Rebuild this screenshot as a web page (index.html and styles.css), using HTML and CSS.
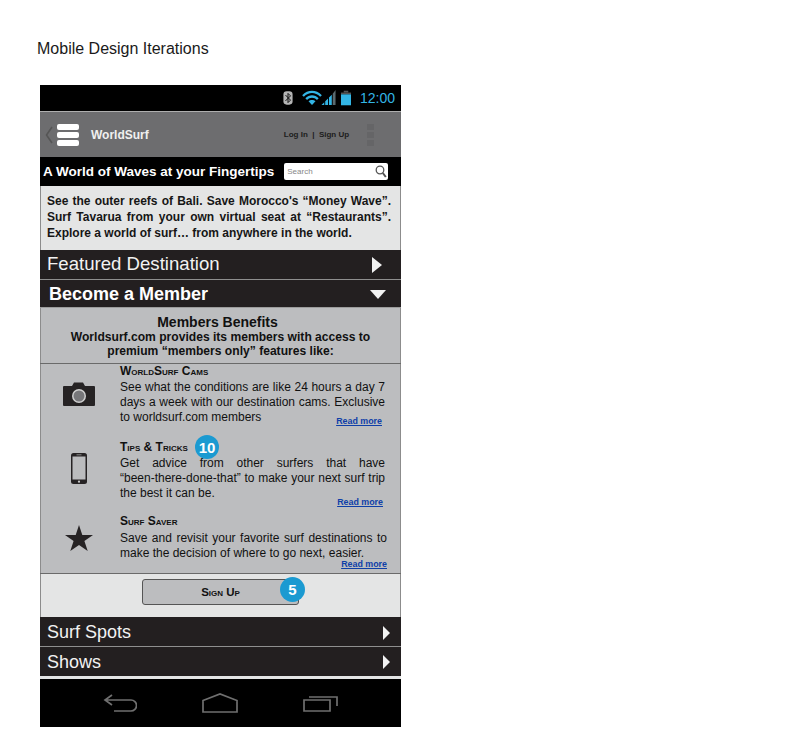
FILE: index.html
```html
<!DOCTYPE html>
<html lang="en">
<head>
  <meta charset="UTF-8" />
  <title>Mobile Design Iterations</title>
  <link rel="stylesheet" href="styles.css">
</head>
<body>

  <h1 class="page-title">Mobile Design Iterations</h1>

  <div class="phone">
    <div class="status-bar">
      <svg class="bt" width="10" height="16" viewBox="0 0 12 17">
        <rect x="0.5" y="0.5" width="11" height="16" rx="4" fill="#b5b5b5"/>
        <path d="M3 5l6 6-3 3V3l3 3-6 6" fill="none" stroke="#111" stroke-width="1.2"/>
      </svg>
      <svg class="wifi" width="20" height="15" viewBox="0 0 21 16">
        <path d="M0 5.500C6 -0.700 15 -0.700 21 5.500l-1.800 1.800C14 2 7 2 1.800 7.300z" fill="#33b5e5"/>
        <path d="M3.400 8.800C7.500 4.600 13.500 4.600 17.600 8.800l-1.800 1.800C12.700 7.500 8.300 7.500 5.200 10.600z" fill="#33b5e5"/>
        <path d="M6.800 12.100C8.700 10.200 12.300 10.200 14.200 12.100L10.500 16z" fill="#33b5e5"/>
      </svg>
      <svg class="signal" width="15" height="15" viewBox="0 0 15 16">
        <path d="M0 16L3 13V16zM4 16V12L7 9V16zM8 16V8L11 5V16z" fill="#33b5e5"/>
        <path d="M12 16V4L15 0V16z" fill="#5a6a70"/>
      </svg>
      <svg class="battery" width="10" height="16" viewBox="0 0 11 16">
        <rect x="3" y="0" width="5" height="2" fill="#555"/>
        <rect x="0" y="2" width="11" height="2" fill="#555"/>
        <rect x="0" y="4" width="11" height="12" fill="#33b5e5"/>
      </svg>
      <span class="clock">12:00</span>
    </div>

    <div class="app-header">
      <svg class="back" width="8" height="18" viewBox="0 0 8 18">
        <path d="M7 1L1.500 9 7 17" fill="none" stroke="#555" stroke-width="1.600"/>
      </svg>
      <div class="logo-stack"><i></i><i></i><i></i></div>
      <span class="brand">WorldSurf</span>
      <span class="auth">Log In &nbsp;|&nbsp; Sign Up</span>
      <div class="overflow"><i></i><i></i><i></i></div>
    </div>

    <div class="tagline">
      <span>A World of Waves at your Fingertips</span>
      <div class="search">
        <span>Search</span>
        <svg width="12" height="13" viewBox="0 0 12 13">
          <circle cx="5" cy="5" r="3.800" fill="none" stroke="#555" stroke-width="1.300"/>
          <path d="M7.800 8l3 4" stroke="#555" stroke-width="2"/>
        </svg>
      </div>
    </div>

    <p class="intro">
      <span class="fit">See the outer reefs of Bali. Save Morocco's “Money Wave”.</span>
      <span class="fit">Surf Tavarua from your own virtual seat at “Restaurants”.</span>
      <span>Explore a world of surf… from anywhere in the world.</span>
    </p>

    <div class="row row-featured">
      <span>Featured Destination</span>
      <div class="arrow-right big"></div>
    </div>
    <div class="row row-member">
      <span>Become a Member</span>
      <div class="arrow-down"></div>
    </div>

    <div class="benefits-head">
      <h3>Members Benefits</h3>
      <p>Worldsurf.com provides its members with access to premium “members only” features like:</p>
    </div>

    <div class="benefits">
      <div class="benefit cams">
        <div class="benefit-icon">
          <svg width="32" height="24" viewBox="0 0 32 24">
            <path d="M1 4h8l2-3.500h9l2 3.500h9a1 1 0 0 1 1 1v18a1 1 0 0 1-1 1H1a1 1 0 0 1-1-1V5a1 1 0 0 1 1-1z" fill="#262324"/>
            <circle cx="16" cy="14" r="7" fill="#d0d0d0"/>
            <circle cx="16" cy="14" r="5.500" fill="#77777a"/>
          </svg>
        </div>
        <div class="benefit-body">
          <h4>WorldSurf Cams</h4>
          <p>See what the conditions are like 24 hours a day 7 days a week with our destination cams. Exclusive to worldsurf.com members</p>
          <a class="more" href="#">Read more</a>
        </div>
      </div>

      <div class="benefit tips">
        <div class="benefit-icon">
          <svg width="16" height="31" viewBox="0 0 16 31">
            <rect x="0" y="0" width="16" height="31" rx="2.500" fill="#262324"/>
            <rect x="1.500" y="3.500" width="13" height="23" fill="#bbbcbe"/>
            <rect x="5.500" y="1.300" width="5" height="1" fill="#888"/>
            <circle cx="8" cy="28.700" r="1.100" fill="#ccc"/>
          </svg>
        </div>
        <div class="benefit-body">
          <h4>Tips &amp; Tricks</h4>
          <p>
            <span class="fit">Get advice from other surfers that have</span>
            <span class="fit">“been-there-done-that” to make your next surf trip</span>
            <span>the best it can be.</span>
          </p>
          <a class="more" href="#">Read more</a>
        </div>
        <span class="badge badge-tips">10</span>
      </div>

      <div class="benefit saver">
        <div class="benefit-icon">
          <svg width="28" height="26" viewBox="0 0 28 26">
            <path d="M14 0l3.300 9.900H28l-8.600 6.200 3.300 9.900L14 19.900 5.300 26l3.300-9.900L0 9.900h10.700z" fill="#262324"/>
          </svg>
        </div>
        <div class="benefit-body">
          <h4>Surf Saver</h4>
          <p>Save and revisit your favorite surf destinations to make the decision of where to go next, easier.</p>
          <a class="more" href="#">Read more</a>
        </div>
      </div>
    </div>

    <div class="signup">
      <button class="signup-btn">Sign Up</button>
      <span class="badge badge-signup">5</span>
    </div>

    <div class="row row-spots">
      <span>Surf Spots</span>
      <div class="arrow-right"></div>
    </div>
    <div class="row row-shows">
      <span>Shows</span>
      <div class="arrow-right"></div>
    </div>

    <div class="nav-bar">
      <svg width="34" height="18" viewBox="0 0 34 18">
        <path d="M9 1L2 6l7 5M2 6h26a4.500 4.500 0 0 1 0 11H11" fill="none" stroke="#6f6f6f" stroke-width="1.700"/>
      </svg>
      <svg width="36" height="20" viewBox="0 0 36 20">
        <path d="M1 7.500L18 1l17 6.500V19H1z" fill="none" stroke="#6f6f6f" stroke-width="1.700"/>
      </svg>
      <svg width="35" height="18" viewBox="0 0 35 18">
        <path d="M1 6h26v11H1zM6 3h28v9" fill="none" stroke="#6f6f6f" stroke-width="1.700"/>
      </svg>
    </div>
  </div>

</body>
</html>
```

FILE: styles.css
```css
* {
  box-sizing: border-box;
}

body {
  margin: 0;
  padding: 40px 0 0 37px;
  background: #fff;
  color: #111;
  font-family: 'Liberation Sans', Arial, sans-serif;
}

.page-title {
  margin: 0 0 28px;
  font-size: 16px;
  line-height: 17px;
  font-weight: normal;
  color: #1a1a1a;
}

.phone {
  position: relative;
  width: 361px;
  height: 642px;
  margin-left: 3px;
  background: #e4e5e5;
  overflow: hidden;
}

.status-bar {
  display: flex;
  align-items: center;
  justify-content: flex-end;
  height: 26px;
  padding-right: 6px;
  background: #000;
  border-bottom: 1px solid #000;
}

.bt { margin-right: 9px; }
.wifi { margin-right: -1px; }
.signal { margin-right: 5px; }
.battery { margin-right: 9px; }

.clock {
  font-size: 14px;
  color: #33b5e5;
}

.app-header {
  display: flex;
  align-items: center;
  height: 46px;
  padding-left: 5px;
  background: #6d6d6f;
  border-top: 1px solid #aeaeae;
}

.back { margin-right: 4px; }

.logo-stack {
  display: flex;
  flex-direction: column;
  gap: 2px;
  width: 22px;
}

.logo-stack i {
  display: block;
  height: 6px;
  background: #fff;
  border-radius: 2px;
}

.brand {
  margin-left: 12px;
  font-size: 12px;
  font-weight: bold;
  color: #f0f0f0;
}

.auth {
  margin-left: 135px;
  font-size: 8px;
  font-weight: bold;
  color: #1c1c1c;
  white-space: nowrap;
}

.overflow {
  display: flex;
  flex-direction: column;
  gap: 2px;
  margin-left: 18px;
}

.overflow i {
  display: block;
  width: 7px;
  height: 6px;
  background: #656567;
}

.tagline {
  display: flex;
  align-items: center;
  height: 29px;
  padding-left: 3px;
  background: #000;
  color: #fff;
  font-size: 13.500px;
  font-weight: bold;
  white-space: nowrap;
}

.search {
  display: flex;
  align-items: center;
  justify-content: space-between;
  width: 104px;
  height: 17px;
  margin-left: 10px;
  padding: 0 1px 0 3px;
  background: #fff;
  border-radius: 2px;
  font-size: 8px;
  font-weight: normal;
  color: #888;
}

.intro,
.benefits-head,
.benefits,
.signup {
  box-shadow: inset 1px 0 #8c8c8c, inset -1px 0 #8c8c8c;
}

.intro {
  height: 64px;
  margin: 0;
  padding: 7px 10px 0 7px;
  font-size: 12px;
  line-height: 16px;
  font-weight: bold;
  color: #161616;
}

.fit {
  display: block;
  text-align: justify;
  text-align-last: justify;
}

.row {
  display: flex;
  align-items: center;
  justify-content: space-between;
  background: #231f20;
  color: #f2f2f2;
}

.row-featured {
  height: 30px;
  padding: 0 19px 0 7px;
  border-bottom: 1px solid #8f8f8f;
  font-size: 18.600px;
}

.row-featured span {
  margin-bottom: 2px;
}

.row-member {
  height: 28px;
  padding: 2px 15px 0 9px;
  border-bottom: 1px solid #9c9c9c;
  font-size: 18px;
  font-weight: bold;
  color: #fff;
}

.row-spots,
.row-shows {
  height: 30px;
  padding: 0 11px 0 7px;
  font-size: 18px;
}

.row-spots {
  padding-top: 2px;
  border-bottom: 1px solid #8f8f8f;
}

.row-shows {
  height: 29px;
}

.row-shows span {
  margin-top: 2px;
}

.arrow-right {
  width: 0;
  height: 0;
  border-top: 7px solid transparent;
  border-bottom: 7px solid transparent;
  border-left: 7px solid #f2f2f2;
}

.arrow-right.big {
  border-top-width: 8px;
  border-bottom-width: 8px;
  border-left-width: 10px;
}

.arrow-down {
  width: 0;
  height: 0;
  border-left: 8px solid transparent;
  border-right: 8px solid transparent;
  border-top: 9px solid #f2f2f2;
}

.benefits-head {
  height: 56px;
  padding-top: 7px;
  background-color: #bcbdbf;
  border-bottom: 1px solid #6a6a6a;
  text-align: center;
  color: #111;
}

.benefits-head h3 {
  margin: 0;
  padding-right: 6px;
  font-size: 14px;
  line-height: 15px;
  font-weight: bold;
}

.benefits-head p {
  margin: 0 auto;
  width: 330px;
  font-size: 12.100px;
  line-height: 14px;
  font-weight: bold;
}

.benefits {
  height: 210px;
  background: #bcbdbf;
  border-bottom: 1px solid #6a6a6a;
}

.benefit {
  position: relative;
  display: flex;
}

.benefit-icon {
  display: flex;
  justify-content: center;
  width: 78px;
  margin-right: 2px;
  flex: none;
}

.benefit-body {
  position: relative;
  width: 265px;
}

.benefit-body h4 {
  margin: 0 0 2px;
  font-size: 12px;
  line-height: 13px;
  font-weight: bold;
  font-variant: small-caps;
  color: #111;
}

.benefit-body p {
  margin: 0;
  font-size: 12px;
  line-height: 15px;
  text-align: justify;
  color: #111;
}

.more {
  position: absolute;
  right: 2px;
  bottom: -1px;
  font-size: 8.900px;
  line-height: 11px;
  font-weight: bold;
  color: #0f3fa8;
}

.cams {
  height: 77px;
}

.cams .benefit-icon { padding-top: 18px; }
.cams .benefit-body { height: 61px; margin-top: 1px; }
.cams .more { right: 3px; }

.tips {
  height: 74px;
}

.tips .benefit-icon { padding-top: 12px; }
.tips .benefit-body { height: 66px; }

.saver .benefit-icon { padding-top: 10px; }
.saver .benefit-body { width: 267px; height: 54px; }
.saver h4 { margin-bottom: 3px; }
.saver .more { right: 0; }

.badge {
  position: absolute;
  display: flex;
  align-items: center;
  justify-content: center;
  border-radius: 50%;
  background: #1b9ad1;
  color: #fff;
  font-weight: bold;
}

.badge-tips {
  left: 155px;
  top: -6px;
  width: 24px;
  height: 24px;
  font-size: 15px;
}

.badge-signup {
  left: 240px;
  top: 3px;
  width: 25px;
  height: 25px;
  font-size: 15px;
}

.signup {
  position: relative;
  height: 43px;
  padding: 5px 0 0 102px;
}

.signup-btn {
  display: block;
  width: 157px;
  height: 26px;
  padding: 0;
  background: #bcbdbf;
  border: 1px solid #555;
  border-radius: 3px;
  font-family: inherit;
  font-size: 11.500px;
  font-weight: bold;
  font-variant: small-caps;
  color: #111;
}

.nav-bar {
  display: flex;
  align-items: center;
  justify-content: center;
  gap: 65px;
  height: 48px;
  margin-top: 3px;
  padding-bottom: 1px;
  background: #000;
}
```
